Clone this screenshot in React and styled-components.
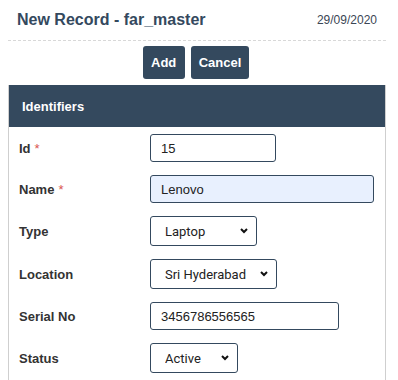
import React from 'react'
import styled, { createGlobalStyle } from 'styled-components'

const GlobalStyle = createGlobalStyle`
    body {
        margin: 0;
        background: #fff;
        font-family: "Liberation Sans", Arial, sans-serif;
        color: #333;
    }
`

const Page = styled.div`
    width: 398px;
`
const Header = styled.div`
    margin: 0 12px 0 8px;
    padding: 0 9px;
    height: 41px;
    display: flex;
    justify-content: space-between;
    align-items: center;
    border-bottom: 1px dashed #d8d8d8;
    box-sizing: border-box;
`
const Title = styled.h1`
    margin: 0;
    font-size: 16px;
    font-weight: bold;
    color: #34495e;
`
const DateText = styled.span`
    font-size: 12px;
    color: #3b4654;
`
const Actions = styled.div`
    display: flex;
    justify-content: center;
    gap: 6px;
    padding: 5px 0 6px;
    margin-left: -6px;
`
const Button = styled.button`
    height: 33px;
    padding: 0 8px;
    min-width: 42px;
    border: none;
    border-radius: 3px;
    background: #34495e;
    color: #fff;
    font-family: "Liberation Sans", Arial, sans-serif;
    font-size: 13px;
    font-weight: bold;
`
const Panel = styled.div`
    margin: 0 12px 0 8px;
    border: 1px solid #cfcfcf;
    border-top: none;
`
const PanelHeader = styled.div`
    height: 42px;
    display: flex;
    align-items: center;
    padding-left: 13px;
    background: #34495e;
    color: #fff;
    font-size: 13px;
    font-weight: bold;
`
const Body = styled.div`
    display: grid;
    grid-template-columns: 131px 1fr;
    row-gap: 13px;
    align-items: center;
    padding: 7px 0 12px 10px;
`
const Label = styled.label`
    font-size: 13px;
    font-weight: bold;
    color: #333;
`
const Req = styled.span`
    color: #d9534f;
    font-weight: normal;
    margin-left: 4px;
`
const Input = styled.input`
    box-sizing: border-box;
    width: ${p => p.w}px;
    height: 28px;
    padding: 0 10px;
    border: 1px solid #34495e;
    border-radius: 3px;
    background: ${p => p.filled ? '#e8f0fe' : '#fff'};
    font-family: "Liberation Sans", Arial, sans-serif;
    font-size: 13px;
    color: #222;
    outline: none;
`
const SelectWrap = styled.div`
    position: relative;
    width: ${p => p.w}px;
    height: 30px;
`
const Select = styled.select`
    appearance: none;
    box-sizing: border-box;
    width: 100%;
    height: 100%;
    padding: 0 0 0 14px;
    border: 1px solid #34495e;
    border-radius: 3px;
    background: #fff;
    font-family: Roboto, "Liberation Sans", sans-serif;
    font-size: 13px;
    color: #222;
    outline: none;
`
const Chevron = styled.svg`
    position: absolute;
    right: 9px;
    top: 12px;
    pointer-events: none;
`

const Dropdown = ({ w, value }) => (
    <SelectWrap w={w}>
        <Select defaultValue={value}>
            <option>{value}</option>
        </Select>
        <Chevron width="8" height="6" viewBox="0 0 8 6">
            <path d="M1 1l3 3 3-3" fill="none" stroke="#111" strokeWidth="2" />
        </Chevron>
    </SelectWrap>
)

const App = () => {
    return (
        <>
            <GlobalStyle />
            <Page>
                <Header>
                    <Title>New Record - far_master</Title>
                    <DateText>29/09/2020</DateText>
                </Header>
                <Actions>
                    <Button>Add</Button>
                    <Button>Cancel</Button>
                </Actions>
                <Panel>
                    <PanelHeader>Identifiers</PanelHeader>
                    <Body>
                        <Label>Id<Req>*</Req></Label>
                        <Input w={126} defaultValue="15" />
                        <Label>Name<Req>*</Req></Label>
                        <Input w={224} filled defaultValue="Lenovo" />
                        <Label>Type</Label>
                        <Dropdown w={107} value="Laptop" />
                        <Label>Location</Label>
                        <Dropdown w={127} value="Sri Hyderabad" />
                        <Label>Serial No</Label>
                        <Input w={189} defaultValue="3456786556565" />
                        <Label>Status</Label>
                        <Dropdown w={88} value="Active" />
                    </Body>
                </Panel>
            </Page>
        </>
    )
}

export default App
